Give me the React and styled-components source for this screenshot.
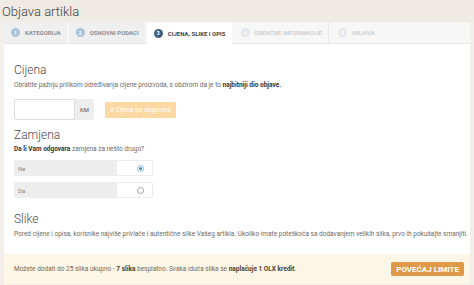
import React from 'react';
import styled, { createGlobalStyle } from 'styled-components';

const GlobalStyle = createGlobalStyle`
  html, body {
    margin: 0;
    padding: 0;
    background: #f2efea;
    font-family: Roboto, "Liberation Sans", sans-serif;
    overflow: hidden;
  }
`;

const Page = styled.div`
  width: 474px;
  height: 285px;
  overflow: hidden;
`;

const Header = styled.div`
  height: 22px;
  padding: 0 2px;
  display: flex;
  align-items: center;
  background: #efebe4;
`;

const Title = styled.h1`
  margin: 0;
  font-size: 13px;
  font-weight: 300;
  color: #3f3f3f;
`;

const TabBar = styled.div`
  display: flex;
  height: 22px;
  margin: 0 4px;
  gap: 2px;
  background: #f7f7f7;
  border-bottom: 1px solid #e6e6e6;
  box-sizing: border-box;
`;

const Tab = styled.div`
  display: flex;
  align-items: center;
  gap: 5px;
  padding: 0 6px 0 7px;
  font-size: 6px;
  font-weight: 700;
  text-transform: uppercase;
  background: ${({ $state }) =>
    $state === 'active' ? '#ffffff' : $state === 'done' ? '#efefef' : '#f7f7f7'};
  color: ${({ $state }) =>
    $state === 'active' ? '#3c4650' : $state === 'done' ? '#8b8f94' : '#cbcfd2'};
  border-right: ${({ $divider }) => ($divider ? '1px solid #e8e8e8' : 'none')};
  margin-bottom: ${({ $state }) => ($state === 'active' ? '-1px' : '0')};
`;

const Step = styled.span`
  width: 9px;
  height: 9px;
  border-radius: 50%;
  display: flex;
  align-items: center;
  justify-content: center;
  font-size: 5px;
  color: #fff;
  background: ${({ $state }) =>
    $state === 'active' ? '#41617f' : $state === 'done' ? '#a9c4dc' : '#e3e7eb'};
`;

const Panel = styled.div`
  margin: 0 4px;
  background: #fff;
  padding: 19px 10px 0;
  height: 240px;
  box-sizing: border-box;
`;

const Heading = styled.h2`
  margin: ${({ $top }) => $top || 0}px 0 0;
  font-size: 12px;
  line-height: 14px;
  font-weight: 300;
  color: #4a4a4a;
`;

const Text = styled.p`
  margin: ${({ $top }) => $top || 0}px 0 0;
  font-size: 6.5px;
  line-height: 9px;
  color: #6a6a6a;
  white-space: nowrap;
  b {
    color: #333;
    font-weight: 700;
  }
`;

const PriceRow = styled.div`
  display: flex;
  align-items: center;
  margin-top: 9px;
`;

const Input = styled.div`
  width: 59px;
  height: 19px;
  border: 1px solid #dcdcdc;
  border-radius: 2px 0 0 2px;
  background: #fff;
`;

const Addon = styled.div`
  width: 19px;
  height: 21px;
  display: flex;
  align-items: center;
  justify-content: center;
  background: #eeeeee;
  font-size: 6px;
  color: #555;
  border-radius: 0 2px 2px 0;
`;

const SoftButton = styled.div`
  margin-left: 11px;
  height: 16px;
  padding: 0 5px;
  display: flex;
  align-items: center;
  background: #fcd9a2;
  color: #fff;
  font-size: 6.5px;
  border-radius: 1px;
`;

const Options = styled.div`
  display: flex;
  flex-direction: column;
  gap: 6px;
  margin-top: 6px;
  width: 139px;
`;

const Option = styled.div`
  display: flex;
  height: 16px;
  border: 1px solid #ececec;
  border-radius: 2px;
  box-sizing: border-box;
  font-size: 6px;
  color: #888;
`;

const OptionLabel = styled.div`
  flex: 0 0 99px;
  background: #ededed;
  display: flex;
  align-items: center;
  padding-left: 3px;
`;

const OptionRadio = styled.div`
  flex: 1;
  display: flex;
  align-items: center;
  justify-content: flex-end;
  padding-right: 8px;
`;

const Radio = styled.span`
  width: 5px;
  height: 5px;
  border-radius: 50%;
  border: 1px solid ${({ $on }) => ($on ? '#8fbde6' : '#a0a0a0')};
  display: flex;
  align-items: center;
  justify-content: center;
  &::after {
    content: '';
    width: 3px;
    height: 3px;
    border-radius: 50%;
    background: ${({ $on }) => ($on ? '#3f84cc' : 'transparent')};
  }
`;

const Notice = styled.div`
  margin: 15px -10px 0;
  height: 30px;
  padding: 0 6px 0 10px;
  display: flex;
  align-items: center;
  justify-content: space-between;
  background: #fcf6e7;
  font-size: 6.5px;
  color: #6f6a5e;
  b {
    color: #4a4230;
  }
`;

const LimitButton = styled.div`
  height: 14px;
  padding: 0 5px;
  display: flex;
  align-items: center;
  background: #df9a49;
  color: #fff;
  font-size: 8px;
  font-weight: 700;
  border-radius: 2px;
`;

const tabs = [
  { n: 1, label: 'Kategorija', state: 'done' },
  { n: 2, label: 'Osnovni podaci', state: 'done' },
  { n: 3, label: 'Cijena, slike i opis', state: 'active' },
  { n: 4, label: 'Dodatne informacije', state: 'todo', divider: true },
  { n: 5, label: 'Objava', state: 'todo' },
];

export default function App() {
  return (
    <Page>
      <GlobalStyle />
      <Header>
        <Title>Objava artikla</Title>
      </Header>
      <TabBar>
        {tabs.map((t) => (
          <Tab key={t.n} $state={t.state} $divider={t.divider}>
            <Step $state={t.state}>{t.n}</Step>
            {t.label}
          </Tab>
        ))}
      </TabBar>
      <Panel>
        <Heading>Cijena</Heading>
        <Text $top={4}>
          Obratite pažnju prilikom određivanja cijene proizvoda, s obzirom da je to{' '}
          <b>najbitniji dio objave.</b>
        </Text>
        <PriceRow>
          <Input />
          <Addon>KM</Addon>
          <SoftButton># Cijena po dogovoru</SoftButton>
        </PriceRow>
        <Heading $top={8}>Zamjena</Heading>
        <Text $top={3}>
          <b>Da li Vam odgovara</b> zamjena za nešto drugo?
        </Text>
        <Options>
          <Option>
            <OptionLabel>Ne</OptionLabel>
            <OptionRadio>
              <Radio $on />
            </OptionRadio>
          </Option>
          <Option>
            <OptionLabel>Da</OptionLabel>
            <OptionRadio>
              <Radio />
            </OptionRadio>
          </Option>
        </Options>
        <Heading $top={14}>Slike</Heading>
        <Text $top={4}>
          Pored cijene i opisa, korisnike najviše privlače i autentične slike Vašeg artikla. Ukoliko
          imate poteškoća sa dodavanjem velikih slika, prvo ih pokušajte smanjiti.
        </Text>
        <Notice>
          <span>
            Možete dodati do 25 slika ukupno - <b>7 slika</b> besplatno. Svaka iduća slika se{' '}
            <b>naplaćuje 1 OLX kredit</b>.
          </span>
          <LimitButton>POVEĆAJ LIMITE</LimitButton>
        </Notice>
      </Panel>
    </Page>
  );
}
